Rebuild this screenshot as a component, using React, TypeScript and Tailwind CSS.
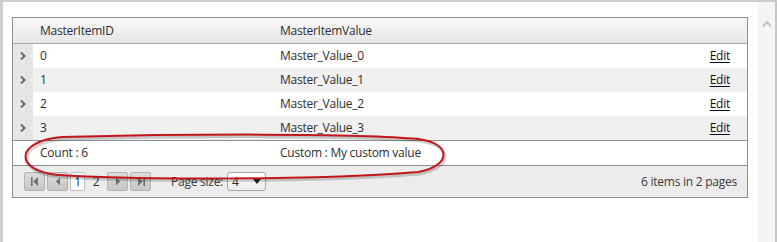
import { Fragment } from 'react';

interface MasterRow {
    id: number;
    value: string;
}

const rows: MasterRow[] = [
    { id: 0, value: 'Master_Value_0' },
    { id: 1, value: 'Master_Value_1' },
    { id: 2, value: 'Master_Value_2' },
    { id: 3, value: 'Master_Value_3' },
];

function Chevron(): JSX.Element {
    return (
        <svg width="8" height="10" viewBox="0 0 8 10" className="block">
            <path d="M2 1.5 L5.5 5 L2 8.5" fill="none" stroke="#6a6a6a" strokeWidth="2" />
        </svg>
    );
}

function PagerButton({ kind }: { kind: 'first' | 'prev' | 'next' | 'last' }): JSX.Element {
    return (
        <div className="flex h-[19px] w-[21px] items-center justify-center rounded-[2px] border border-[#b3b3b3] bg-gradient-to-b from-[#dcdcdc] to-[#c6c6c6]">
            <svg width="10" height="11" viewBox="0 0 10 11">
                {kind === 'first' && (
                    <>
                        <rect x="1" y="1" width="1.6" height="9" fill="#727272" />
                        <path d="M8 1 L3.2 5.5 L8 10 Z" fill="#727272" />
                    </>
                )}
                {kind === 'prev' && <path d="M7 1.5 L2.8 5.5 L7 9.5 Z" fill="#727272" />}
                {kind === 'next' && <path d="M3 1.5 L7.2 5.5 L3 9.5 Z" fill="#727272" />}
                {kind === 'last' && (
                    <>
                        <path d="M2 1 L6.8 5.5 L2 10 Z" fill="#727272" />
                        <rect x="7.4" y="1" width="1.6" height="9" fill="#727272" />
                    </>
                )}
            </svg>
        </div>
    );
}

export default function App(): JSX.Element {
    return (
        <div
            className="relative flex h-[242px] w-[777px] overflow-hidden border-l-[3px] border-t-2 border-[#cdcdcd] bg-white text-[12px] tracking-[-0.25px] text-[#2e2e2e]"
            style={{ fontFamily: '"Open Sans", "Noto Sans", sans-serif' }}
        >
            <div className="flex-1 pl-[9px] pt-[15px]">
                <div className="w-[736px] border border-[#8f8f8f]">
                    {/* header */}
                    <div className="flex h-[26px] items-center border-b border-[#a8a8a8] bg-gradient-to-b from-[#f8f8f8] to-[#e6e6e6] pt-[1px]">
                        <div className="w-[20px]" />
                        <div className="w-[240px] pl-[7px]">MasterItemID</div>
                        <div className="flex-1 pl-[7px]">MasterItemValue</div>
                    </div>

                    {rows.map((row, index) => (
                        <Fragment key={row.id}>
                            <div className={`flex h-[24px] items-center ${index % 2 === 1 ? 'bg-[#f0f0f0]' : 'bg-white'}`}>
                                <div className="flex h-full w-[20px] items-center justify-center bg-[#e6e6e6]">
                                    <Chevron />
                                </div>
                                <div className="w-[240px] pl-[7px]">{row.id}</div>
                                <div className="flex-1 pl-[7px]">{row.value}</div>
                                <div className="pr-[17px] text-[#111] underline underline-offset-2">Edit</div>
                            </div>
                        </Fragment>
                    ))}

                    {/* footer */}
                    <div className="flex h-[26px] items-center border-y border-[#8f8f8f] bg-white">
                        <div className="w-[20px]" />
                        <div className="w-[240px] pl-[7px]">Count : 6</div>
                        <div className="flex-1 pl-[7px]">Custom : My custom value</div>
                    </div>

                    {/* pager */}
                    <div className="flex h-[31px] items-center bg-[#ececec] pl-[11px] pr-[10px]">
                        <div className="flex items-center gap-[2px]">
                            <PagerButton kind="first" />
                            <PagerButton kind="prev" />
                            <div className="flex h-[19px] w-[15px] items-center justify-center rounded-[2px] border border-[#bdbdbd] bg-white text-[#1d1d5c]">
                                1
                            </div>
                            <div className="w-[18px] text-center text-[#25254a]">2</div>
                            <PagerButton kind="next" />
                            <PagerButton kind="last" />
                        </div>
                        <span className="ml-[20px] text-[#3a3a3a]">Page size:</span>
                        <div className="ml-[4px] flex h-[19px] w-[39px] items-center justify-between rounded-[3px] border border-[#a6a6a6] bg-gradient-to-b from-white to-[#ececec] pl-[4px] pr-[4px]">
                            <span>4</span>
                            <svg width="8" height="5" viewBox="0 0 8 5">
                                <path d="M0 0 L8 0 L4 5 Z" fill="#222" />
                            </svg>
                        </div>
                        <span className="ml-auto text-[#3a3a3a]">6 items in 2 pages</span>
                    </div>
                </div>
            </div>

            {/* scrollbar */}
            <div className="flex w-[19px] justify-center border-r-2 border-[#c6c6c6] bg-[#f5f5f5] pt-[18px]">
                <svg width="10" height="8" viewBox="0 0 10 8">
                    <path d="M1 6.5 L5 2 L9 6.5" fill="none" stroke="#c4c4c4" strokeWidth="2" />
                </svg>
            </div>

            {/* annotation */}
            <svg className="pointer-events-none absolute left-[-3px] top-[-2px]" width="777" height="242">
                <path
                    d="M62 137 C180 134 360 133 418 139 C452 143 452 166 418 172 C330 180 130 180 58 175 C14 171 14 141 62 137 Z"
                    fill="none"
                    stroke="rgba(0,0,0,0.18)"
                    strokeWidth="3"
                    transform="translate(1.5 2)"
                />
                <path
                    d="M62 137 C180 134 360 133 418 139 C452 143 452 166 418 172 C330 180 130 180 58 175 C14 171 14 141 62 137 Z"
                    fill="none"
                    stroke="#c3161c"
                    strokeWidth="2"
                />
            </svg>
        </div>
    );
}
